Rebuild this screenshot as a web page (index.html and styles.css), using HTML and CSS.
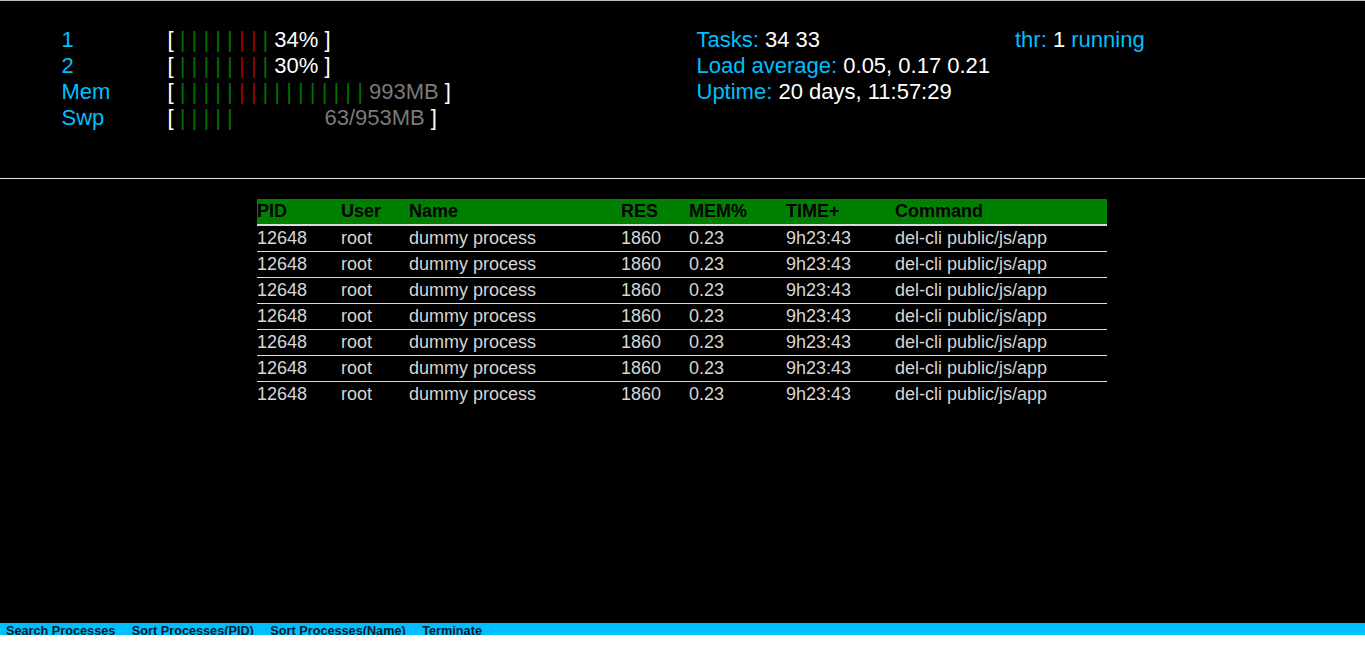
FILE: index.html
```html
<!DOCTYPE html>
<html lang="en">
<head>
<meta charset="utf-8">
<title>htop</title>
<link rel="stylesheet" href="styles.css">
</head>
<body>
<div class="app">
  <header class="stats">
    <div class="meters">
      <span class="lbl">1</span>
      <span class="bar">[ <span class="g">| | | | | </span><span class="r">| | </span><span class="g">| </span><span class="val">34% </span>]</span>
      <span class="lbl">2</span>
      <span class="bar">[ <span class="g">| | | | | </span><span class="r">| | </span><span class="g">| </span><span class="val">30% </span>]</span>
      <span class="lbl">Mem</span>
      <span class="bar">[ <span class="g">| | | | | </span><span class="r">| | </span><span class="g">| | | | | | | | | </span><span class="dim">993MB</span> ]</span>
      <span class="lbl">Swp</span>
      <span class="bar">[ <span class="g">| | | | | </span>              <span class="dim">63/953MB</span> ]</span>
    </div>
    <div class="info">
      <div class="info-col">
        <div><span class="lbl">Tasks: </span><span class="val">34 33</span></div>
        <div><span class="lbl">Load average: </span><span class="val">0.05, 0.17 0.21</span></div>
        <div><span class="lbl">Uptime: </span><span class="val">20 days, 11:57:29</span></div>
      </div>
      <div class="info-col">
        <div><span class="lbl">thr: </span><span class="val">1</span><span class="lbl"> running</span></div>
      </div>
    </div>
  </header>
  <main class="procs">
    <table class="ptable">
      <colgroup>
        <col class="c-pid"><col class="c-user"><col class="c-name"><col class="c-res"><col class="c-mem"><col class="c-time"><col class="c-cmd">
      </colgroup>
      <thead>
        <tr><th>PID</th><th>User</th><th>Name</th><th>RES</th><th>MEM%</th><th>TIME+</th><th>Command</th></tr>
      </thead>
      <tbody>
        <tr><td>12648</td><td>root</td><td>dummy process</td><td>1860</td><td>0.23</td><td>9h23:43</td><td>del-cli public/js/app</td></tr>
        <tr><td>12648</td><td>root</td><td>dummy process</td><td>1860</td><td>0.23</td><td>9h23:43</td><td>del-cli public/js/app</td></tr>
        <tr><td>12648</td><td>root</td><td>dummy process</td><td>1860</td><td>0.23</td><td>9h23:43</td><td>del-cli public/js/app</td></tr>
        <tr><td>12648</td><td>root</td><td>dummy process</td><td>1860</td><td>0.23</td><td>9h23:43</td><td>del-cli public/js/app</td></tr>
        <tr><td>12648</td><td>root</td><td>dummy process</td><td>1860</td><td>0.23</td><td>9h23:43</td><td>del-cli public/js/app</td></tr>
        <tr><td>12648</td><td>root</td><td>dummy process</td><td>1860</td><td>0.23</td><td>9h23:43</td><td>del-cli public/js/app</td></tr>
        <tr><td>12648</td><td>root</td><td>dummy process</td><td>1860</td><td>0.23</td><td>9h23:43</td><td>del-cli public/js/app</td></tr>
      </tbody>
    </table>
  </main>
</div>
<footer class="menu">
  <span class="item">Search Processes</span>
  <span class="item">Sort Processes(PID)</span>
  <span class="item">Sort Processes(Name)</span>
  <span class="item">Terminate</span>
</footer>
</body>
</html>
```
FILE: styles.css
```css
html, body {
  margin: 0;
  padding: 0;
  background: #ffffff;
}

body {
  font-family: "Liberation Sans", Arial, sans-serif;
}

.app {
  background: #000000;
  height: 623px;
  overflow: hidden;
}

.stats {
  box-sizing: border-box;
  height: 179px;
  border-top: 1px solid #bdbdbd;
  border-bottom: 1px solid #e2e2e2;
  padding-top: 26px;
  display: flex;
  font-size: 22px;
  line-height: 26px;
}

.meters {
  margin-left: 61.5px;
  width: 635px;
  display: grid;
  grid-template-columns: 106px auto;
  align-content: start;
}

.meters .lbl {
  color: #00bfff;
}

.bar {
  color: #ffffff;
  white-space: pre;
}

.bar .g {
  color: #007000;
}

.bar .r {
  color: #9a0000;
}

.bar .val {
  color: #ffffff;
}

.bar .dim {
  color: #7a7a7a;
}

.info {
  display: grid;
  grid-template-columns: 318.5px auto;
  align-content: start;
}

.info .lbl {
  color: #00bfff;
}

.info .val {
  color: #ffffff;
}

.procs {
  padding-top: 20px;
  padding-right: 1px;
}

.ptable {
  width: 850px;
  margin: 0 auto;
  table-layout: fixed;
  border-collapse: separate;
  border-spacing: 0;
  font-size: 18px;
  line-height: 25px;
}

.c-pid { width: 84px; }
.c-user { width: 68px; }
.c-name { width: 212px; }
.c-res { width: 68px; }
.c-mem { width: 97px; }
.c-time { width: 109px; }
.c-cmd { width: 212px; }

.ptable th {
  background: #008000;
  color: #000000;
  font-weight: bold;
  text-align: left;
  padding: 0;
  height: 25px;
  border-bottom: 2px solid #dcdcdc;
}

.ptable td {
  color: #d6d6d6;
  padding: 0;
  height: 25px;
  border-bottom: 1px solid #dcdcdc;
  white-space: nowrap;
}

.ptable tbody tr:last-child td {
  border-bottom: none;
}

.menu {
  background: #00bfff;
  height: 12px;
  overflow: hidden;
  display: flex;
  gap: 16.5px;
  padding-left: 6px;
  font-size: 12.7px;
  font-weight: bold;
  color: #0d1b2a;
  line-height: 16px;
}

.menu .item {
  white-space: nowrap;
}
```
